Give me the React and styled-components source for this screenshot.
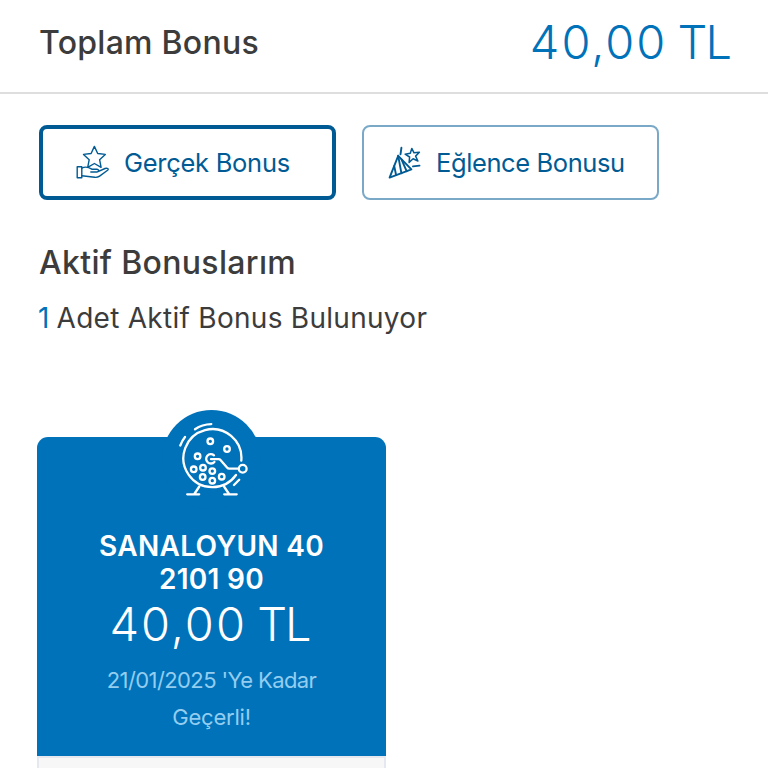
import React from "react";
import styled, { createGlobalStyle } from "styled-components";

const App = () => (
  <>
    <GlobalStyle />
    <Page>
      <TotalBar>
        <TotalLabel>Toplam Bonus</TotalLabel>
        <TotalAmount>
          <Digits>40,00</Digits> <Unit>TL</Unit>
        </TotalAmount>
      </TotalBar>
      <Tabs>
        <Tab $active>
          <StarHandIcon />
          <TabLabel $spacing="-0.28px">Gerçek Bonus</TabLabel>
        </Tab>
        <Tab>
          <ConfettiIcon />
          <TabLabel $spacing="-0.4px">Eğlence Bonusu</TabLabel>
        </Tab>
      </Tabs>
      <Heading>Aktif Bonuslarım</Heading>
      <Summary>
        <Count>1</Count> Adet Aktif Bonus Bulunuyor
      </Summary>
      <Card>
        <CardTop>
          <Badge>
            <DrumIcon />
          </Badge>
          <CardTitle>
            SANALOYUN 40
            <br />
            2101 90
          </CardTitle>
          <CardAmount>
            <Digits>40,00</Digits> <Unit>TL</Unit>
          </CardAmount>
          <CardDate>
            <DateLine $spacing="-0.6px">21/01/2025 'Ye Kadar</DateLine>
            <DateLine $spacing="-0.2px">Geçerli!</DateLine>
          </CardDate>
        </CardTop>
        <CardBottom />
      </Card>
    </Page>
  </>
);

const StarHandIcon = () => (
  <Icon viewBox="0 0 34 36" $stroke={1.4}>
    <path d="M18.400 1.400l3.300 7.100 7.600.9-5.700 5.300 1.500 7.600-6.700-3.800-6.700 3.800 1.500-7.600-5.700-5.300 7.600-.9z" />
    <path d="M1.200 21.800h4.600v10.900H1.200z" />
    <path d="M5.800 23.200c4-2.200 7.200-.8 10 1h5.200c2.200.2 2.200 2.600 0 2.800h-6.200M22.600 26.400l6.400-2.900c2.200-.8 4.200.2 2.600 1.800l-8 5.800c-1.400 1-3.200 1.400-4.900 1.200L5.800 30.800" />
  </Icon>
);

const ConfettiIcon = () => (
  <Icon viewBox="0 0 34 36" $stroke={1.9}>
    <path d="M10.200 10.800L1.600 32.600l21.800-8.200z" />
    <path d="M10.200 10.800l3.200 17.400M6.200 21l1.900 9M13.600 14.600l5 11.600" />
    <path d="M13.400 2.800l-.9 6.600M25 21.400l6.500-.8" />
    <path
      strokeWidth="1.5"
      d="M23.800 3.400l2.200 4.400 5.400-.5-3.800 3.800 2.300 4.900-4.800-2.200-4 3.600.5-5.400-4.500-2.800 5.200-1z"
    />
  </Icon>
);

// ball drum with its crank and stand
const DrumIcon = () => (
  <DrumSvg viewBox="0 0 72 76">
    <path d="M62.300 39.700A29 29 0 1 0 57 54" />
    <circle cx="31.300" cy="20.300" r="2.800" />
    <circle cx="48" cy="28" r="2.800" />
    <circle cx="18.600" cy="35.300" r="2.800" />
    <circle cx="14.700" cy="48.300" r="2.800" />
    <circle cx="24" cy="46.700" r="2.800" />
    <circle cx="33.300" cy="50.100" r="2.800" />
    <circle cx="23.700" cy="56" r="2.800" />
    <circle cx="42.700" cy="55.700" r="2.800" />
    <circle cx="33.300" cy="59.700" r="2.800" />
    <path d="M35 34.300a4.700 4.700 0 1 0 .4 6.600M32 38.200h7.500c1 0 1.600.3 2.200 1l6.300 7.400c.7.800 1.300 1.100 2.300 1.100h9.200" />
    <circle cx="63.700" cy="47.700" r="3.900" />
    <path d="M16 8.300C21 4.800 26.500 3.200 32.300 3.100M1.300 24.500c1.200-3.300 2.700-6 4.700-8.500" />
    <path d="M55 64l5.200-5.200" />
    <path d="M20.300 65.500L15.300 73M45 65.500l5 7.500M8.200 73.300h12M45.200 73.300h12.500" />
  </DrumSvg>
);

const GlobalStyle = createGlobalStyle`
  body {
    margin: 0;
    background: #fff;
    color: #3c3c3c;
    font-family: Inter, "Open Sans", sans-serif;
  }
`;

const Page = styled.main`
  height: 768px;
  overflow: hidden;
`;

const TotalBar = styled.header`
  display: flex;
  justify-content: space-between;
  box-sizing: border-box;
  height: 94px;
  padding: 0 38px 0 39px;
  border-bottom: 2px solid #dedede;
`;

const TotalLabel = styled.span`
  font-size: 32px;
  font-weight: 500;
  letter-spacing: 0.27px;
  line-height: 86px;
`;

const TotalAmount = styled.span`
  color: #0072b9;
  font-size: 47px;
  font-weight: 350;
  line-height: 84px;
`;

const Digits = styled.span`
  letter-spacing: 2px;
`;

const Unit = styled.span`
  margin-left: -3px;
  letter-spacing: -2px;
`;

const Tabs = styled.nav`
  display: flex;
  gap: 26px;
  padding: 31px 39px 0;
`;

const Tab = styled.button`
  display: flex;
  align-items: center;
  box-sizing: border-box;
  width: 297px;
  height: 75px;
  padding: 0 0 0 ${(p) => (p.$active ? "33px" : "24px")};
  border: ${(p) => (p.$active ? "4px solid #005b94" : "2px solid #7aa9c8")};
  border-radius: 8px;
  background: #fff;
  color: #005b94;
  font-family: inherit;
`;

const TabLabel = styled.span`
  margin-left: 14px;
  font-size: 25.5px;
  letter-spacing: ${(p) => p.$spacing};
  white-space: nowrap;
`;

const Icon = styled.svg`
  flex: none;
  width: 34px;
  height: 36px;
  fill: none;
  stroke: currentColor;
  stroke-width: ${(p) => p.$stroke};
  stroke-linecap: round;
  stroke-linejoin: round;
`;

const Heading = styled.h2`
  margin: 43px 0 0 39px;
  font-size: 32px;
  font-weight: 500;
  letter-spacing: 0.33px;
  line-height: 40px;
`;

const Summary = styled.p`
  margin: 15px 0 0 38px;
  font-size: 28px;
  letter-spacing: 0.28px;
  line-height: 40px;
`;

const Count = styled.span`
  color: #0072b9;
  letter-spacing: -1px;
`;

const Card = styled.section`
  width: 349px;
  margin: 99px 0 0 37px;
`;

const CardTop = styled.div`
  position: relative;
  box-sizing: border-box;
  height: 319px;
  padding-top: 93px;
  border-radius: 11px 11px 0 0;
  background: #0072b9;
  color: #fff;
  text-align: center;
`;

const Badge = styled.div`
  position: absolute;
  top: -27px;
  left: 125px;
  width: 99px;
  height: 99px;
  border-radius: 50%;
  background: #0072b9;
`;

const DrumSvg = styled.svg`
  position: absolute;
  top: 11px;
  left: 17px;
  width: 72px;
  height: 76px;
  fill: none;
  stroke: #fff;
  stroke-width: 2.3;
  stroke-linecap: round;
  stroke-linejoin: round;
`;

const CardTitle = styled.h3`
  margin: 0;
  font-size: 28px;
  font-weight: 600;
  letter-spacing: 0.3px;
  line-height: 33px;
`;

const CardAmount = styled.div`
  padding-right: 4px;
  font-size: 47px;
  font-weight: 300;
  line-height: 56px;
`;

const CardDate = styled.p`
  margin: 10px 0 0;
  color: #93cdf0;
  font-size: 22px;
  line-height: 37px;
`;

const DateLine = styled.span`
  display: block;
  letter-spacing: ${(p) => p.$spacing};
`;

const CardBottom = styled.div`
  height: 60px;
  border: 2px solid #e6e8f0;
  background: #f7f7f8;
`;

export default App;
